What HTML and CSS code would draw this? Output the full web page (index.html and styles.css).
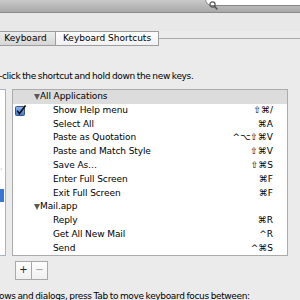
FILE: index.html
```html
<!DOCTYPE html>
<html>
<head>
<meta charset="utf-8">
<link rel="stylesheet" href="styles.css">
</head>
<body>
<div class="toolbar">
  <div class="search">
    <svg class="glass" width="9" height="9" viewBox="0 0 9 9"><circle cx="3.5" cy="3.5" r="2.6" fill="none" stroke="#555" stroke-width="1.2"/><path d="M5.4 5.4 L8.4 8.4" stroke="#555" stroke-width="1.5"/></svg>
  </div>
</div>
<div class="main">
  <div class="tabs">
    <div class="tab">Keyboard</div>
    <div class="tab active">Keyboard Shortcuts</div>
  </div>
  <p class="hint">-click the shortcut and hold down the new keys.</p>
  <div class="lists">
    <div class="cats">
      <div class="cat-scroll">‹</div>
      <div class="cat-sel"></div>
    </div>
    <div class="shortcuts">
      <div class="row group head"><span class="tri"></span><span class="name">All Applications</span></div>
      <div class="row item"><span class="check"><svg width="12" height="11" viewBox="0 0 12 11"><defs><linearGradient id="cb" x1="0" y1="0" x2="0" y2="1"><stop offset="0" stop-color="#8fb6ee"/><stop offset="1" stop-color="#3d78d2"/></linearGradient></defs><rect x="0.5" y="1.5" width="9" height="9" rx="1" fill="url(#cb)" stroke="#34558c"/><path d="M2.2 5.6 L4.4 8.6 L10.6 0.6" fill="none" stroke="#111" stroke-width="1.6"/></svg></span><span class="name">Show Help menu</span><span class="key">⇧⌘/</span></div>
      <div class="row item"><span class="name">Select All</span><span class="key">⌘A</span></div>
      <div class="row item"><span class="name">Paste as Quotation</span><span class="key">^⌥⇧⌘V</span></div>
      <div class="row item"><span class="name">Paste and Match Style</span><span class="key">⇧⌘V</span></div>
      <div class="row item"><span class="name">Save As…</span><span class="key">⇧⌘S</span></div>
      <div class="row item"><span class="name">Enter Full Screen</span><span class="key">⌘F</span></div>
      <div class="row item"><span class="name">Exit Full Screen</span><span class="key">⌘F</span></div>
      <div class="row group"><span class="tri"></span><span class="name">Mail.app</span></div>
      <div class="row item"><span class="name">Reply</span><span class="key">⌘R</span></div>
      <div class="row item"><span class="name">Get All New Mail</span><span class="key">^R</span></div>
      <div class="row item"><span class="name">Send</span><span class="key">^⌘S</span></div>
    </div>
  </div>
  <div class="buttons">
    <div class="btn">+</div>
    <div class="btn dim">−</div>
  </div>
  <p class="foot">ows and dialogs, press Tab to move keyboard focus between:</p>
</div>
</body>
</html>
```

FILE: styles.css
```css
html, body {
  margin: 0;
  padding: 0;
}
body {
  width: 300px;
  height: 300px;
  overflow: hidden;
  background: #e8e8e8;
  font-family: "DejaVu Sans", sans-serif;
  font-size: 9px;
  color: #000;
}
.toolbar {
  height: 12px;
  border-bottom: 1px solid #8c8c8c;
  background: linear-gradient(to bottom, #c9c9c9, #a8a8a8);
  display: flex;
  justify-content: flex-end;
}
.search {
  width: 100px;
  height: 13px;
  margin-top: -9px;
  margin-right: -10px;
  background: #fff;
  border: 1px solid #858585;
  border-radius: 7px;
  display: flex;
  align-items: flex-end;
  padding-left: 3px;
}
.glass {
  margin-bottom: -5px;
}
.main {
  background: #ebebeb;
}
.tabs {
  display: flex;
  margin-top: 18px;
  margin-left: -5px;
  height: 15px;
  background: linear-gradient(to bottom, transparent 7px, #a9a9a9 7px, #a9a9a9 8px, transparent 8px);
}
.tab {
  height: 13px;
  line-height: 13px;
  border: 1px solid #9d9d9d;
  background: linear-gradient(to bottom, #ececec, #d6d6d6);
  text-align: center;
  width: 59px;
}
.tab.active {
  width: 102px;
  border-left: none;
  background: linear-gradient(to bottom, #ffffff, #f1f1f1);
}
.hint {
  margin: 24px 0 0 -1px;
  line-height: 12px;
  white-space: nowrap;
  letter-spacing: -0.35px;
  word-spacing: -0.6px;
}
.lists {
  display: flex;
  margin-top: 7px;
  height: 167px;
}
.cats {
  width: 13px;
  margin-left: -9px;
  background: #fff;
  border: 1px solid #a7b3c3;
  display: flex;
  flex-direction: column;
}
.cat-scroll {
  margin-top: 75px;
  margin-left: 8px;
  font-size: 6px;
  color: #999;
  height: 10px;
}
.cat-sel {
  margin-top: 14px;
  height: 13px;
  background: #3875d7;
  width: 12px;
}
.shortcuts {
  width: 274px;
  margin-left: 6px;
  background: #fff;
  border: 1px solid #ababab;
}
.row {
  display: flex;
  height: 13.8px;
  line-height: 13.8px;
  white-space: nowrap;
  padding-right: 14px;
}
.row.head {
  background: #dcdcdc;
}
.row.group {
  padding-left: 21px;
}
.row.item {
  padding-left: 40px;
}
.name {
  letter-spacing: -0.1px;
}
.tri {
  width: 0;
  height: 0;
  border-left: 3.5px solid transparent;
  border-right: 3.5px solid transparent;
  border-top: 6px solid #5a5a5a;
  margin-top: 4px;
}
.check {
  width: 12px;
  height: 11px;
  margin-left: -38px;
  margin-right: 26px;
  margin-top: 1px;
}
.check svg {
  display: block;
}
.key {
  margin-left: auto;
}
.buttons {
  display: flex;
  margin-top: 5px;
  margin-left: 15px;
}
.btn {
  width: 15px;
  height: 17px;
  line-height: 16px;
  text-align: center;
  border: 1px solid #a8a8a8;
  background: linear-gradient(to bottom, #fdfdfd, #f0f0f0);
  font-size: 10px;
  color: #222;
}
.btn.dim {
  border-left: none;
  color: #9a9a9a;
}
.foot {
  margin: 10px 0 0 -1px;
  line-height: 12px;
  white-space: nowrap;
  letter-spacing: -0.35px;
  word-spacing: -0.6px;
}
```
